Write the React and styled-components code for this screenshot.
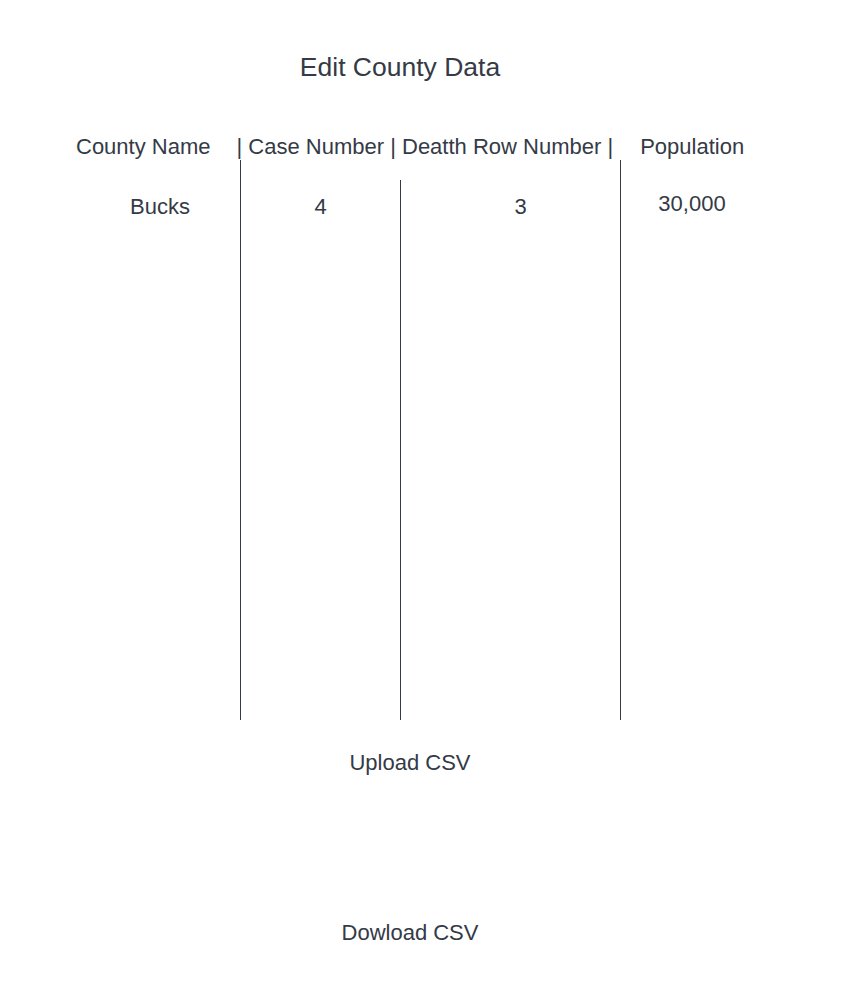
import React from 'react';
import styled, { createGlobalStyle } from 'styled-components';

const rows = [{ county: 'Bucks', cases: '4', deathRow: '3', population: '30,000' }];

export default function App() {
  return (
    <>
      <GlobalStyle />
      <Page>
        <Title>Edit County Data</Title>
        <HeaderRow>
          <HeaderText>County Name</HeaderText>
          <HeaderText gap={26}>| Case Number | Deatth Row Number |</HeaderText>
          <HeaderText gap={27}>Population</HeaderText>
        </HeaderRow>
        <Table>
          {rows.map((row, index) => (
            <React.Fragment key={index}>
              <Cell>{row.county}</Cell>
              <Divider />
              <Cell>{row.cases}</Cell>
              <Divider offset={20} />
              <Cell shift={20}>{row.deathRow}</Cell>
              <Divider />
              <Cell raise={3}>{row.population}</Cell>
            </React.Fragment>
          ))}
        </Table>
        <Actions>
          <ActionButton>Upload CSV</ActionButton>
          <ActionButton>Dowload CSV</ActionButton>
        </Actions>
      </Page>
    </>
  );
}

const GlobalStyle = createGlobalStyle`
  html, body {
    margin: 0;
    padding: 0;
    background: #ffffff;
  }
  body {
    font-family: "Liberation Sans", Arial, sans-serif;
    color: #343a46;
  }
`;

const Page = styled.div`
  width: 851px;
  min-height: 1006px;
  display: flex;
  flex-direction: column;
`;

const Title = styled.h1`
  width: 800px;
  margin: 52px 0 0;
  font-size: 26.5px;
  font-weight: 400;
  line-height: 30px;
  text-align: center;
`;

const HeaderRow = styled.div`
  display: flex;
  margin-top: 52px;
  padding-left: 76px;
  height: 26px;
  align-items: center;
`;

const HeaderText = styled.span`
  font-size: 22px;
  line-height: 26px;
  white-space: pre;
  margin-left: ${(props) => props.gap || 0}px;
`;

const Table = styled.div`
  display: grid;
  grid-template-columns: 160px 1px 159px 1px 219px 1px 142px;
  margin-left: 80px;
  height: 560px;
`;

const Cell = styled.div`
  font-size: 22px;
  line-height: 26px;
  text-align: center;
  padding-top: ${(props) => 34 - (props.raise || 0)}px;
  padding-left: ${(props) => props.shift || 0}px;
`;

const Divider = styled.div`
  background: #343a46;
  margin-top: ${(props) => props.offset || 0}px;
`;

const Actions = styled.div`
  width: 820px;
  display: flex;
  flex-direction: column;
  align-items: center;
  gap: 144px;
  margin-top: 30px;
`;

const ActionButton = styled.button`
  border: none;
  background: none;
  padding: 0;
  font-family: "Liberation Sans", Arial, sans-serif;
  font-size: 22px;
  line-height: 26px;
  color: #343a46;
  cursor: pointer;
`;
